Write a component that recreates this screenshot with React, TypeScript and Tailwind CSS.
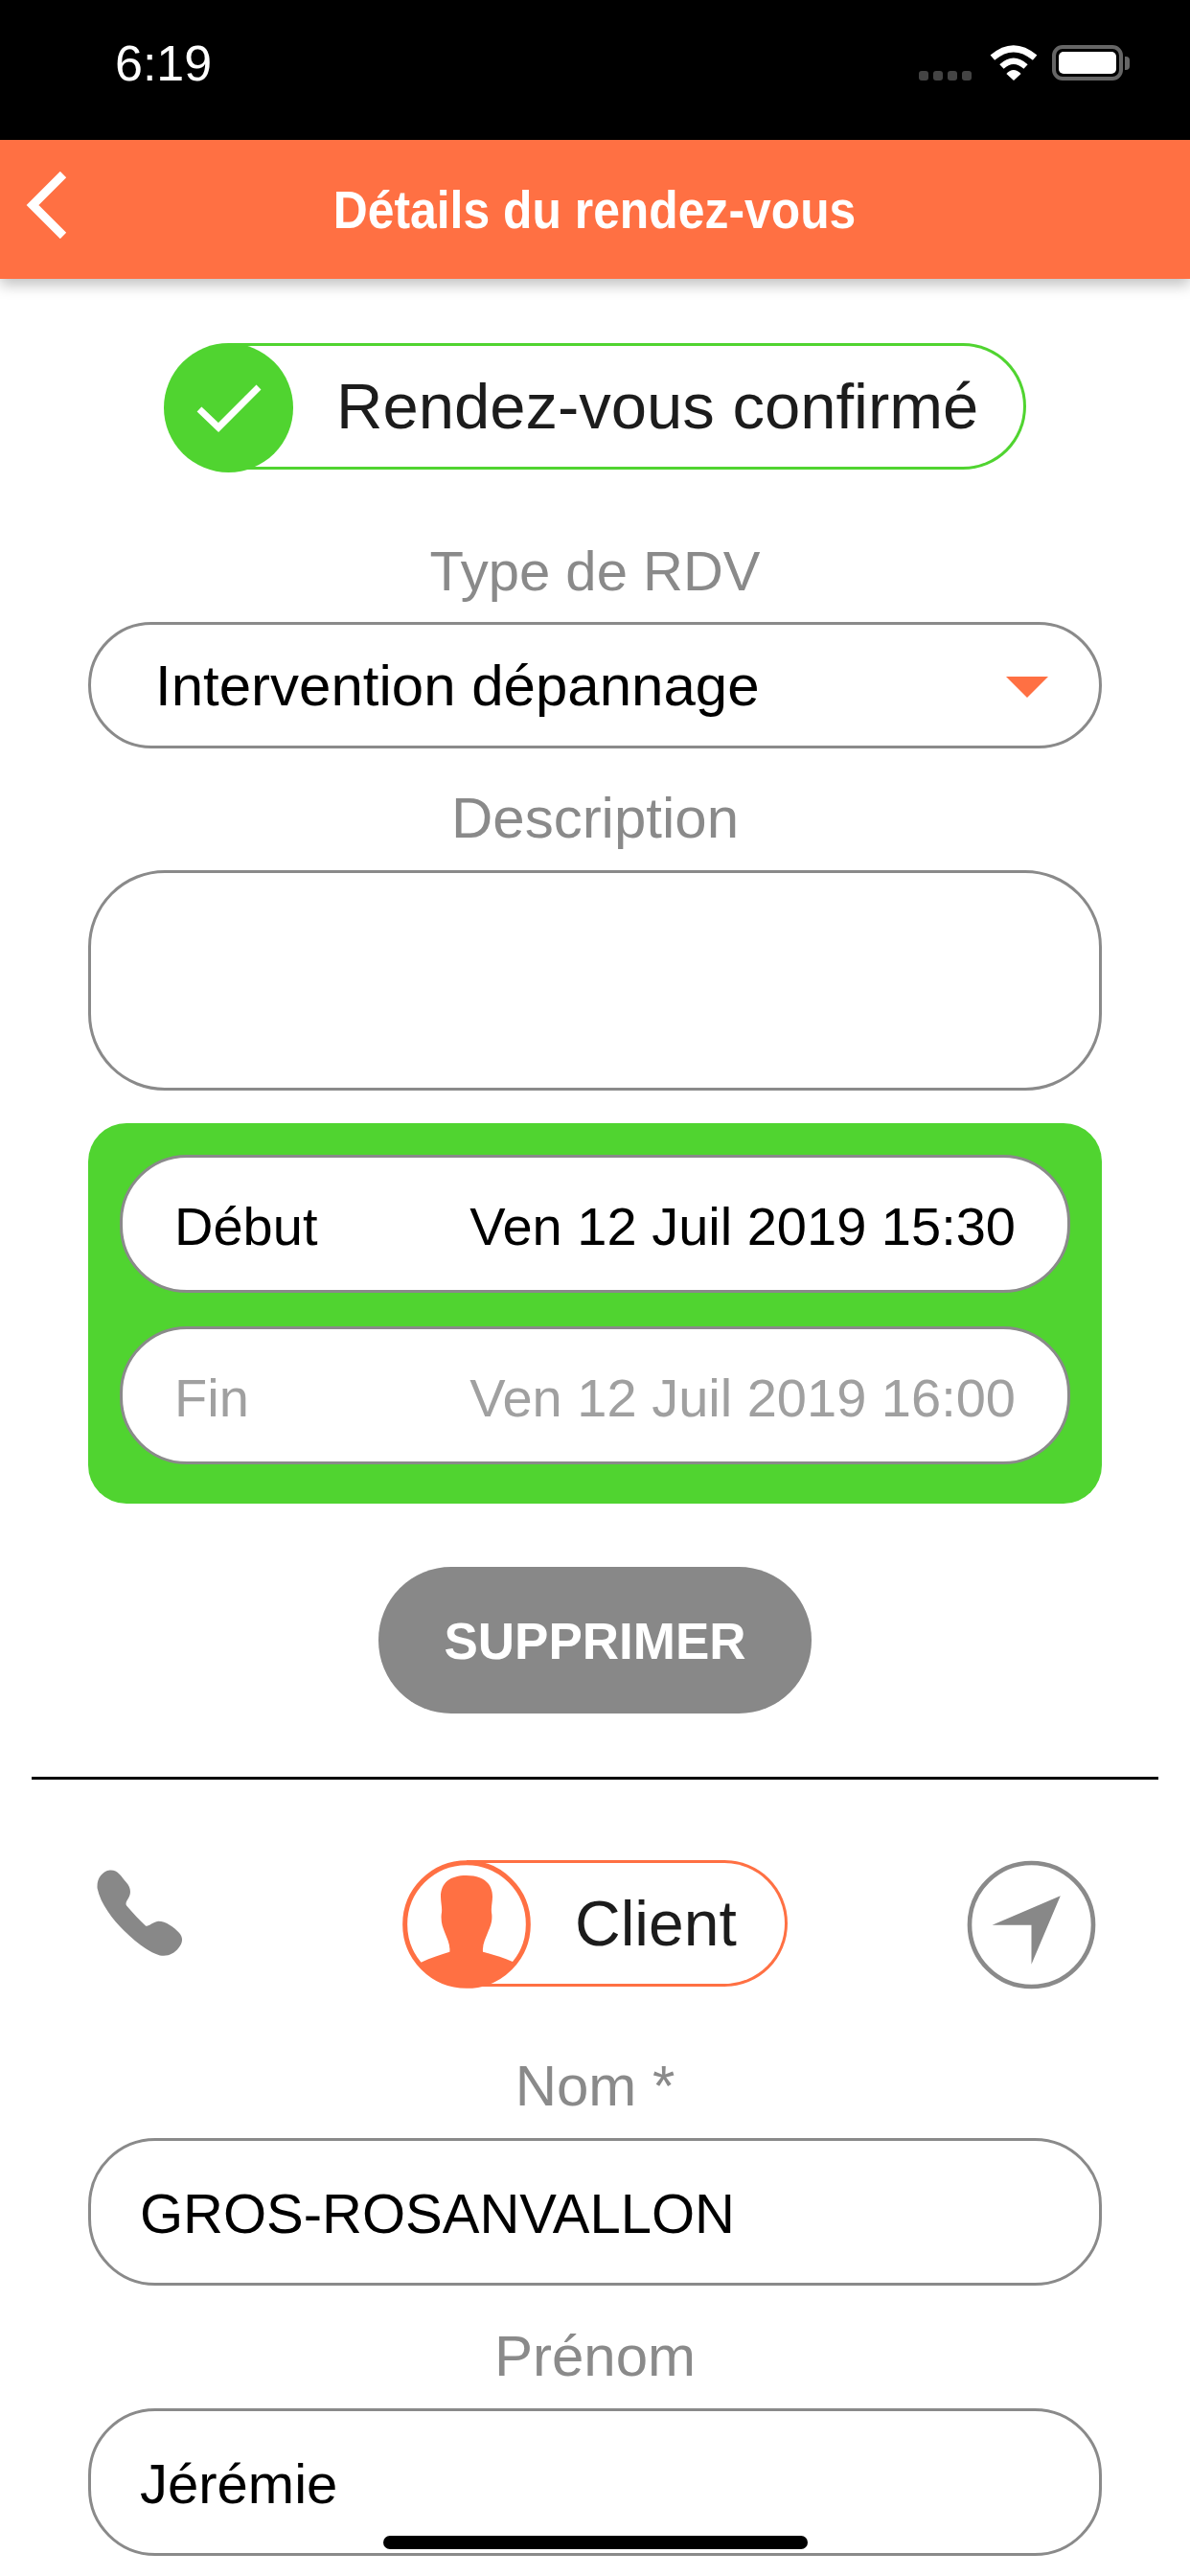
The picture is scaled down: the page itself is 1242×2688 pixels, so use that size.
import React from "react";

const orange = "#ff7043";

const FieldLabel = ({ children }: { children: React.ReactNode }) => (
  <p className="text-center text-[60px] leading-[64px] text-[#8a8a8a]">{children}</p>
);

const TextField = ({ value }: { value: string }) => (
  <div className="mx-[92px] h-[154px] flex items-center pl-[51px] pt-[2px] rounded-[70px] border-[3px] border-[#8a8a8a] bg-white text-[58px] text-black">
    {value}
  </div>
);

const DateRow = ({ label, value, muted }: { label: string; value: string; muted?: boolean }) => (
  <div
    className={
      muted
        ? "h-[144px] flex items-center justify-between px-[54px] pt-[6px] rounded-[70px] border-[3px] border-[#8a8a8a] bg-white text-[56px] text-[#a0a0a0]"
        : "h-[144px] flex items-center justify-between px-[54px] pt-[6px] rounded-[70px] border-[3px] border-[#8a8a8a] bg-white text-[56px] text-black"
    }
  >
    <span>{label}</span>
    <span>{value}</span>
  </div>
);

export default function App() {
  return (
    <div className="w-[1242px] h-[2688px] relative overflow-hidden bg-white font-['Liberation_Sans',Arial,sans-serif]">
      {/* status bar */}
      <div className="h-[146px] bg-black flex items-start justify-between pt-[40px] pl-[120px] pr-[63px]">
        <span className="text-white text-[52px] leading-[52px]">6:19</span>
        <div className="flex items-start mt-[7px]">
          <div className="flex gap-[5px] mt-[27px] mr-[18px]">
            <span className="w-[10px] h-[10px] rounded-[3px] bg-[#444]" />
            <span className="w-[10px] h-[10px] rounded-[3px] bg-[#444]" />
            <span className="w-[10px] h-[10px] rounded-[3px] bg-[#444]" />
            <span className="w-[10px] h-[10px] rounded-[3px] bg-[#444]" />
          </div>
          <svg width="52" height="37" viewBox="272 50 156 112" fill="none" className="mr-[14px]">
            <path d="M283 90 Q349 33 417 90" stroke="#fff" strokeWidth="21" />
            <path d="M312 118 Q349 83 388 118" stroke="#fff" strokeWidth="19" />
            <path d="M327 141 Q349 116 373 141 L350 162 Z" fill="#fff" />
          </svg>
          <div className="w-[74px] h-[37px] rounded-[11px] border-[4px] border-[#666] p-[3px]">
            <div className="w-full h-full rounded-[5px] bg-white" />
          </div>
          <div className="w-[5px] h-[14px] mt-[12px] ml-[2px] rounded-r-[4px] bg-[#666]" />
        </div>
      </div>

      {/* header */}
      <div className="h-[145px] flex items-center justify-center relative shadow-[0_6px_14px_rgba(0,0,0,0.25)]" style={{ backgroundColor: orange }}>
        <svg className="absolute left-[24px] top-[33px]" width="48" height="70" viewBox="0 0 48 70" fill="none">
          <path d="M42 3 L10 35 L42 67" stroke="#fff" strokeWidth="9" />
        </svg>
        <h1 className="text-white text-[56px] font-bold scale-x-[0.89]">Détails du rendez-vous</h1>
      </div>

      {/* confirmed toggle */}
      <div className="flex justify-center mt-[67px]">
        <div className="relative w-[900px] h-[132px] pl-[67px]">
          <div className="h-full rounded-r-[66px] border-y-[3px] border-r-[3px] border-[#50d430] flex items-center pl-[113px] text-[67px] text-[#1c1c1c]">
            Rendez-vous confirmé
          </div>
          <div className="absolute left-0 top-0 w-[135px] h-[135px] rounded-full bg-[#50d430] flex items-center justify-center">
            <svg width="68" height="52" viewBox="0 0 68 52" fill="none">
              <path d="M3 27 L23 46 L65 4" stroke="#fff" strokeWidth="7" />
            </svg>
          </div>
        </div>
      </div>

      <p className="mt-[74px] text-center text-[58px] leading-[64px] text-[#8a8a8a]">Type de RDV</p>
      <div className="mx-[92px] mt-[21px] h-[132px] flex items-center justify-between pl-[67px] pr-[53px] pt-[2px] rounded-[66px] border-[3px] border-[#8a8a8a] text-[60px] text-black">
        <span>Intervention dépannage</span>
        <span className="w-0 h-0 mt-[2px] border-x-[22px] border-x-transparent border-t-[22px]" style={{ borderTopColor: orange }} />
      </div>

      <div className="mt-[41px]">
        <FieldLabel>Description</FieldLabel>
      </div>
      <div className="mx-[92px] mt-[22px] h-[230px] rounded-[80px] border-[3px] border-[#8a8a8a]" />

      {/* dates */}
      <div className="mx-[92px] mt-[34px] h-[397px] rounded-[40px] bg-[#50d430] px-[33px] pt-[33px] flex flex-col gap-[35px]">
        <DateRow label="Début" value="Ven 12 Juil 2019 15:30" />
        <DateRow label="Fin" value="Ven 12 Juil 2019 16:00" muted />
      </div>

      <div className="flex justify-center mt-[66px]">
        <button className="w-[452px] h-[153px] pt-[2px] rounded-[76px] bg-[#888888] text-white text-[53px] font-bold">SUPPRIMER</button>
      </div>

      <div className="mx-[33px] mt-[66px] h-[3px] bg-black" />

      {/* contact row */}
      <div className="mt-[82px] h-[136px] relative flex items-center justify-center">
        <svg className="absolute left-[99px] top-[10px]" width="94" height="94" viewBox="112 144 288 288" fill="#888">
          <path d="M160 152 C185 150 195 170 212 190 C228 208 228 225 220 240 C214 250 208 258 214 266 C235 290 255 312 275 330 C285 333 295 318 315 315 C340 315 365 335 382 352 C396 368 392 385 380 400 C365 420 345 428 320 424 C285 415 240 380 205 345 C170 310 130 260 120 210 C117 180 135 155 160 152 Z" />
        </svg>
        <div className="relative w-[402px] h-[132px] pl-[67px]">
          <div className="h-full rounded-r-[66px] border-y-[3px] border-r-[3px] border-[#ff7043] flex items-center pl-[113px] text-[66px] text-[#1c1c1c]">
            Client
          </div>
          <svg className="absolute left-0 top-0" width="134" height="134" viewBox="60 60 402 402">
            <defs>
              <clipPath id="avatar">
                <circle cx="261" cy="261" r="195" />
              </clipPath>
            </defs>
            <circle cx="261" cy="261" r="193" fill="#fff" stroke="#ff7043" strokeWidth="15" />
            <path
              clipPath="url(#avatar)"
              fill="#ff7043"
              d="M260 108 C310 108 342 130 342 175 C342 195 336 210 340 230 C342 255 334 270 328 285 C320 305 310 325 312 347 C340 355 375 365 405 378 L470 470 L50 470 L118 380 C150 365 180 355 208 347 C210 325 200 305 192 285 C186 270 180 255 182 230 C186 210 180 195 180 175 C180 130 210 108 260 108 Z"
            />
          </svg>
        </div>
        <svg className="absolute left-[1008px] top-[1px]" width="137" height="137" viewBox="50 63 412 412" fill="none">
          <circle cx="256" cy="269" r="194" stroke="#8a8a8a" strokeWidth="14" />
          <path d="M133 270 L347 178 L256 393 L256 270 Z" fill="#888" />
        </svg>
      </div>

      <div className="mt-[70px]">
        <FieldLabel>Nom *</FieldLabel>
      </div>
      <div className="mt-[22px]">
        <TextField value="GROS-ROSANVALLON" />
      </div>
      <div className="mt-[42px]">
        <FieldLabel>Prénom</FieldLabel>
      </div>
      <div className="mt-[22px]">
        <TextField value="Jérémie" />
      </div>

      {/* home indicator */}
      <div className="absolute left-[400px] bottom-[28px] w-[443px] h-[14px] rounded-full bg-black" />
    </div>
  );
}
